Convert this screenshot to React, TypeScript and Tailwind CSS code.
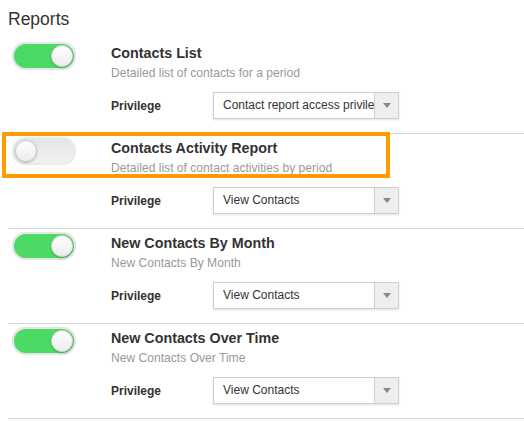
import React from "react";

type Row = { title: string; desc: string; on: boolean; value: string; highlight?: boolean };

const rows: Row[] = [
  { title: "Contacts List", desc: "Detailed list of contacts for a period", on: true, value: "Contact report access privileges" },
  { title: "Contacts Activity Report", desc: "Detailed list of contact activities by period", on: false, value: "View Contacts", highlight: true },
  { title: "New Contacts By Month", desc: "New Contacts By Month", on: true, value: "View Contacts" },
  { title: "New Contacts Over Time", desc: "New Contacts Over Time", on: true, value: "View Contacts" },
];

function Toggle({ on }: { on: boolean }) {
  return on ? (
    <div className="relative w-[64px] h-[28px] rounded-full border-2 border-[#e6e6e6] bg-[#4cd964] shadow-[0_0_1px_rgba(0,0,0,0.15)]">
      <div className="absolute right-[1px] top-[1px] w-[22px] h-[22px] rounded-full bg-gradient-to-b from-[#ffffff] to-[#ececec] border border-[#d6d6d6] shadow-[0_1px_2px_rgba(0,0,0,0.25)]" />
    </div>
  ) : (
    <div className="relative w-[64px] h-[28px] rounded-full border-2 border-[#ebebeb] bg-gradient-to-b from-[#e4e4e4] to-[#f2f2f2] shadow-[0_0_1px_rgba(0,0,0,0.15)]">
      <div className="absolute left-[1px] top-[1px] w-[22px] h-[22px] rounded-full bg-gradient-to-b from-[#ffffff] to-[#ececec] border border-[#c8c8c8] shadow-[0_1px_2px_rgba(0,0,0,0.25)]" />
    </div>
  );
}

function Select({ value }: { value: string }) {
  return (
    <div className="flex w-[186px] h-[27px] border border-[#cfcfcf] bg-white shadow-[0_1px_2px_rgba(0,0,0,0.12)]">
      <div className="flex-1 overflow-hidden whitespace-nowrap pl-[9px] text-[12px] leading-[25px] text-[#333]">
        {value}
      </div>
      <div className="w-[24px] flex items-center justify-center bg-[#eeeeee] border-l border-[#cfcfcf]">
        <svg width="8" height="5" viewBox="0 0 8 5">
          <path d="M0 0 L8 0 L4 5 Z" fill="#888" />
        </svg>
      </div>
    </div>
  );
}

export default function App() {
  return (
    <div
      className="relative min-h-[421px] bg-white pl-2"
      style={{ fontFamily: '"Liberation Sans", Arial, sans-serif' }}
    >
      <h1 className="pt-[7px] mb-[8px] text-[17.5px] leading-[24px] font-normal text-[#333]">Reports</h1>
      {rows.map((r, i) => (
        <div key={i} className="relative flex border-b border-[#d6d6d6]">
          <div className="w-[103px] pl-[4px] pt-[3px]">
            <Toggle on={r.on} />
          </div>
          <div className="flex flex-col pt-[4px] pb-[14px]">
            <div className="text-[14.3px] leading-[20px] font-bold text-[#333]">{r.title}</div>
            <div className="mt-[2px] text-[12.1px] leading-[16px] text-[#999]">{r.desc}</div>
            <div className="mt-[11px] flex items-center">
              <div className="w-[102px] text-[12px] font-bold text-[#333]">Privilege</div>
              <Select value={r.value} />
            </div>
          </div>
          {r.highlight && (
            <div className="absolute left-[-6px] top-[-2px] w-[388px] h-[46px] border-[4px] border-[#ff9a00] pointer-events-none" />
          )}
        </div>
      ))}
    </div>
  );
}
